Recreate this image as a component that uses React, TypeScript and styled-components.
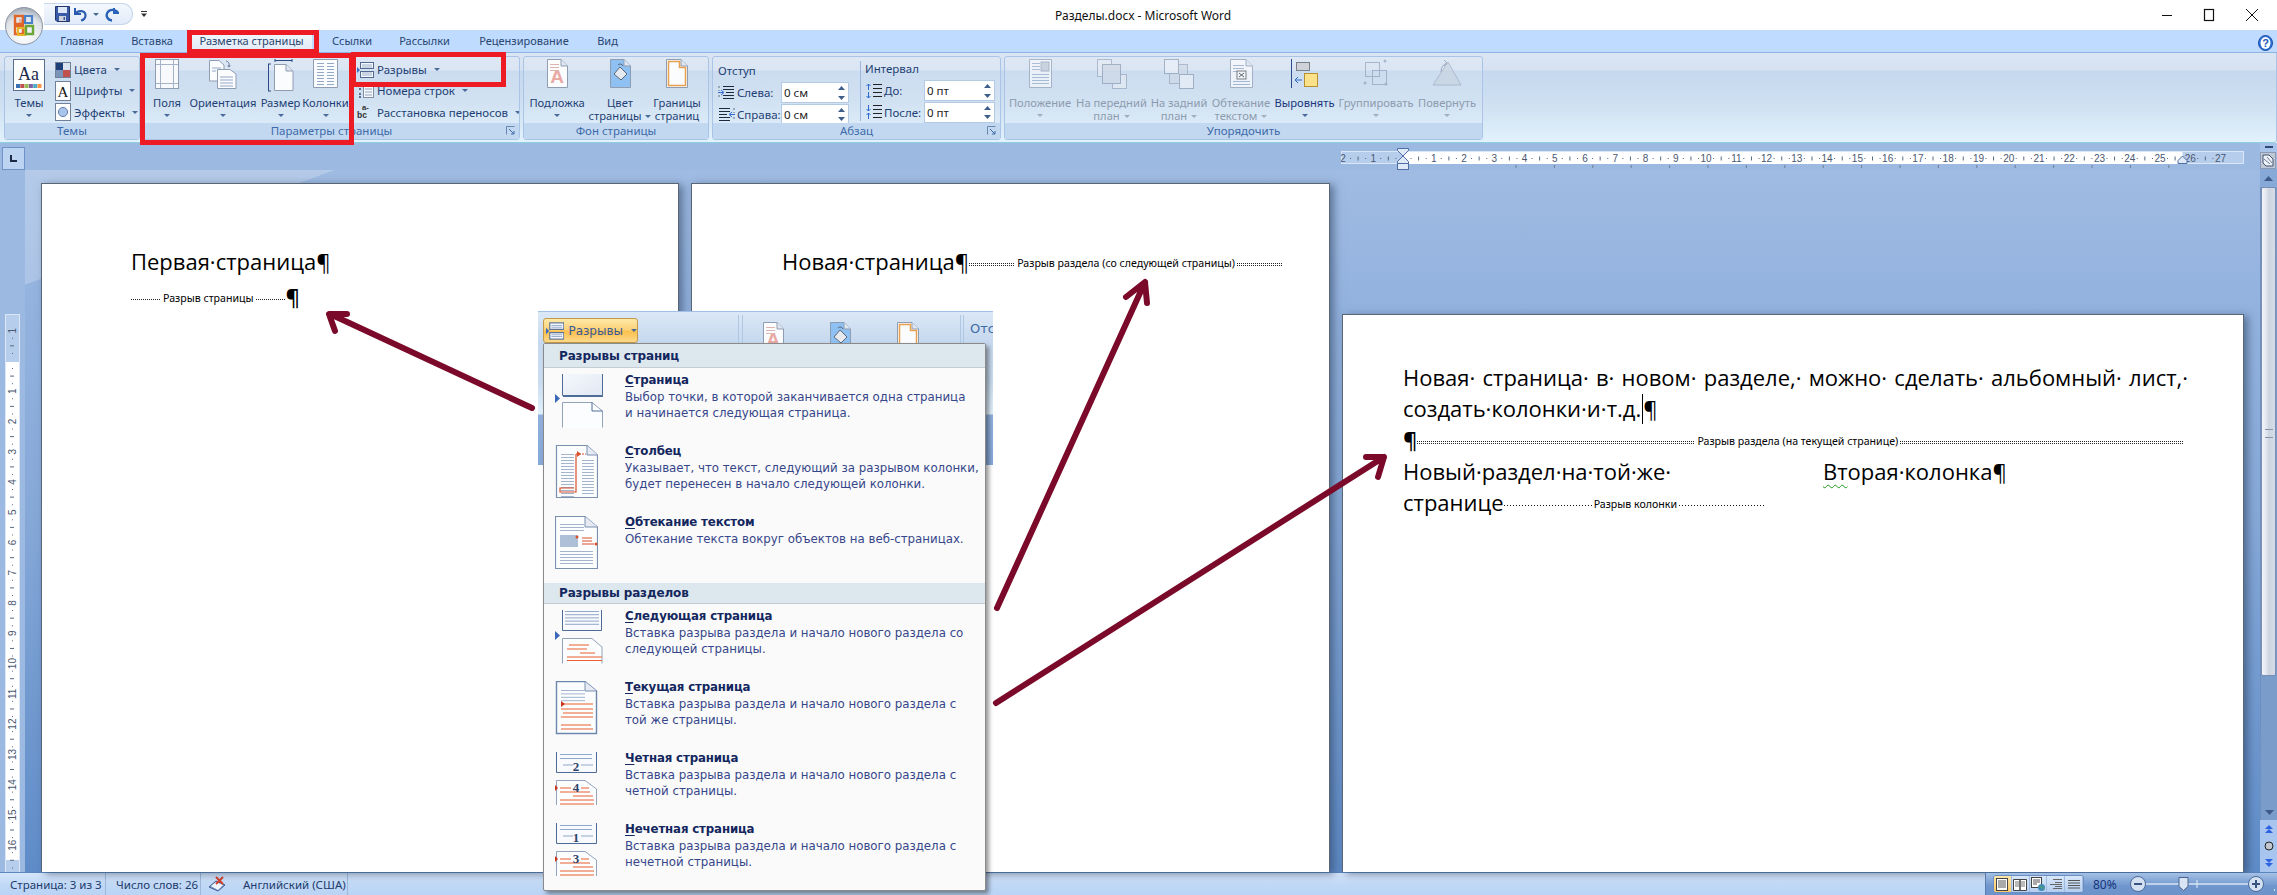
import React from "react";
import styled, { createGlobalStyle } from "styled-components";

const UI = '"Noto Sans", "Liberation Sans", sans-serif';
const DOC = '"Open Sans", "Noto Sans", sans-serif';
const MENU = '"DejaVu Sans", "Noto Sans", sans-serif';

const Global = createGlobalStyle`
  html, body { margin: 0; padding: 0; background: #fff; overflow: hidden; }
  #root { width: 2277px; height: 895px; }
`;

const Win = styled.div`
  position: relative; width: 2277px; height: 895px; overflow: hidden;
  display: flex; flex-direction: column; font-family: ${UI}; color: #1e3f74;
`;

/* ---- title bar ---- */
const TitleBar = styled.div`
  height: 30px; flex: none; display: flex; align-items: center; background: #fff; position: relative;
`;
const Qat = styled.div`
  margin: -2px 0 0 44px; width: 89px; height: 22px; flex: none; display: flex; align-items: center; gap: 0;
  background: linear-gradient(#f4f8fe, #e1ebf8); border: 1px solid #c6d6ec; border-left: none;
  border-radius: 0 12px 12px 0; box-sizing: border-box; padding-left: 9px;
`;
const QatSlot = styled.span<{ $w: number }>`
  width: ${(p) => p.$w}px; height: 20px; display: flex; align-items: center; justify-content: center; flex: none;
`;
const Customize = styled.span`
  margin: -2px 0 0 6px; width: 10px; display: flex; justify-content: center; flex: none;
`;
const Title = styled.div`
  position: absolute; left: 1055px; top: 7px; font-size: 12px; line-height: 18px; color: #111; white-space: nowrap;
`;
const WinBtns = styled.div`
  margin-left: auto; display: flex; align-items: center; gap: 30px; padding-right: 18px;
`;
const Orb = styled.div`
  position: absolute; left: 5px; top: 7px; width: 38px; height: 38px; z-index: 4;
`;

/* ---- tabs ---- */
const TabStrip = styled.div`
  height: 23px; flex: none; background: #bfdbff; display: flex; align-items: flex-end; padding-left: 51px;
  position: relative; box-sizing: border-box; border-bottom: 1px solid #8db2e3;
`;
const Tab = styled.div<{ $active?: boolean; $w: number }>`
  width: ${(p) => p.$w}px; flex: none; height: 22px; line-height: 21px; font-size: 11px; text-align: center; white-space: nowrap;
  color: #28466f; box-sizing: border-box;
  ${(p) => p.$active ? "background: linear-gradient(#f5f9fe,#dfe9f6); border-radius: 3px 3px 0 0;" : ""}
`;
const HelpDot = styled.span`
  position: absolute; right: 4px; top: 4px;
`;

/* ---- ribbon ---- */
const Ribbon = styled.div`
  height: 90px; flex: none; display: flex; gap: 3px; padding: 3px 3px 2px 4px; box-sizing: border-box;
  background: linear-gradient(#dbe6f4 0, #d6e2f2 17px, #c6d8ee 18px, #cddff1 55%, #e2f2fc 100%);
  border-bottom: 1px solid #8fd0de; border-right: 1px solid #a9c4e6; border-radius: 0 0 3px 0;
`;
const Group = styled.div<{ $w: number }>`
  width: ${(p) => p.$w}px; flex: none;
  box-sizing: border-box; display: flex; flex-direction: column;
  border: 1px solid #a9c4e6; border-radius: 3px; overflow: hidden; position: relative;
  background: linear-gradient(rgba(255,255,255,.12), rgba(255,255,255,.05));
`;
const GroupBody = styled.div<{ $pad?: number }>`
  flex: 1; display: flex; padding-left: ${(p) => p.$pad ?? 0}px; min-height: 0;
`;
const GroupLabel = styled.div`
  height: 16px; flex: none; background: #c1d8f0; text-align: center; font-size: 11.5px; line-height: 15px; color: #3e6aa8;
  position: relative;
`;
const Launcher = styled.span`
  position: absolute; right: 4px; top: 3px; width: 9px; height: 9px; display: flex;
`;
const BigBtn = styled.div<{ $w: number; $off?: boolean; $strong?: boolean }>`
  width: ${(p) => p.$w}px; flex: none; display: flex; flex-direction: column; align-items: center;
  font-size: 11.2px; line-height: 13px; white-space: nowrap;
  color: ${(p) => (p.$off ? "#8d9bae" : p.$strong ? "#19367a" : "#1e3f74")};
`;
const BigIcon = styled.div`
  height: 37px; margin-top: 2px; display: flex; align-items: flex-start; justify-content: center; flex: none;
`;
const BigLabel = styled.div`
  height: 13px; margin-top: 0; text-align: center;
`;
const Caret = styled.span<{ $off?: boolean }>`
  display: inline-block; width: 0; height: 0; margin-left: 4px; vertical-align: 2px;
  border-left: 3px solid transparent; border-right: 3px solid transparent;
  border-top: 3px solid ${(p) => (p.$off ? "#a3aebd" : "#4a6a9a")};
`;
const CaretRow = styled.div`
  height: 13px; display: flex; justify-content: center; align-items: center; width: 100%;
  & > span { margin-left: 0; }
`;
const Stack = styled.div<{ $ml?: number }>`
  display: flex; flex-direction: column; margin-left: ${(p) => p.$ml ?? 0}px; padding-top: 2px;
`;
const StackRow = styled.div`
  height: 22px; display: flex; align-items: center; font-size: 11.5px; white-space: nowrap; gap: 3px;
`;
const StackIcon = styled.span<{ $w?: number }>`
  width: ${(p) => p.$w ?? 17}px; height: 18px; flex: none; display: flex; align-items: center; justify-content: center;
`;
const ParaCol = styled.div<{ $w: number; $border?: boolean }>`
  width: ${(p) => p.$w}px; flex: none; padding-left: 4px; box-sizing: border-box; padding-top: 2px;
  ${(p) => (p.$border ? "border-right: 1px solid #9db8dc; margin: 4px 0 2px; padding-top: 0;" : "")}
`;
const ParaHead = styled.div`
  height: 21px; line-height: 20px; font-size: 11.5px;
`;
const ParaRow = styled.div`
  height: 21.5px; display: flex; align-items: center; font-size: 11.5px; white-space: nowrap;
`;
const ParaLabel = styled.span<{ $w: number }>` width: ${(p) => p.$w}px; flex: none; padding-left: 2px; box-sizing: border-box; `;
const Spin = styled.div<{ $w: number }>`
  width: ${(p) => p.$w}px; height: 21px; box-sizing: border-box; background: #fff; border: 1px solid #b4c9e4;
  display: flex; align-items: center; padding-left: 2px; font-size: 11.5px; position: relative; color: #222;
`;
const SpinArrows = styled.span`
  margin-left: auto; width: 14px; height: 19px; display: flex; flex-direction: column; align-items: center; justify-content: space-around;
`;

/* ---- workspace ---- */
const Workspace = styled.div`
  flex: 1; min-height: 0; display: flex; background: linear-gradient(#a2bde3 0, #94b3df 20%, #87a9d8 50%, #5f8cc8 100%);
`;
const Rail = styled.div`
  width: 25px; flex: none; display: flex; flex-direction: column; background: #9cb9e2;
`;
const Corner = styled.div`
  margin: 4px 0 0 2px; width: 23px; height: 23px; flex: none; box-sizing: border-box; background: #bcd3f1; border: 1px solid #6f93c9;
  display: flex; align-items: center; justify-content: center;
`;
const VRulerSvg = styled.svg` display: block; flex: none; `;
const Main = styled.div` flex: 1; min-width: 0; display: flex; flex-direction: column; `;
const RulerRow = styled.div`
  height: 27px; flex: none; padding-left: 1316px; background: linear-gradient(#9cb9e2, #9cb9e2); 
`;
const DocArea = styled.div`
  flex: 1; min-height: 0; display: flex; align-items: stretch; padding: 13px 16px 0 16px; gap: 12px;
  background: linear-gradient(to bottom right, rgba(255,255,255,.22) 49.8%, transparent 50%) no-repeat 0 0 / 310px 115px;
`;
const Page = styled.div<{ $w: number; $pl: number; $mt?: number; $pt: number }>`
  width: ${(p) => p.$w}px; flex: none; box-sizing: border-box; background: #fff; margin-top: ${(p) => p.$mt ?? 0}px;
  padding: ${(p) => p.$pt}px 0 0 ${(p) => p.$pl}px; border-top: 1px solid #5b6675; border-left: 1px solid #5b6675; border-right: 1px solid #5b6675;
  box-shadow: 4px 2px 8px rgba(40,60,90,.55); font-family: ${DOC}; color: #000; font-size: 22px; position: relative;
`;
const Line = styled.div<{ $h?: number; $w?: number }>`
  height: ${(p) => p.$h ?? 31}px; line-height: ${(p) => p.$h ?? 31}px; white-space: nowrap;
  display: flex; align-items: center; ${(p) => (p.$w ? `width:${p.$w}px;` : "")}
`;
const Justified = styled.div<{ $w: number }>`
  width: ${(p) => p.$w}px; height: 31px; line-height: 31px; white-space: normal; text-align: justify; text-align-last: justify;
`;
const Dots = styled.span<{ $w: number; $double?: boolean; $sparse?: boolean }>`
  width: ${(p) => p.$w}px; flex: none; height: ${(p) => (p.$double ? 3 : 1)}px; display: block; margin-top: 5px;
  background: ${(p) => p.$sparse
    ? "repeating-linear-gradient(90deg,#111 0 1px,transparent 1px 3px)"
    : "repeating-linear-gradient(90deg,#222 0 1px,transparent 1px 2px)"};
  ${(p) => (p.$double ? "mask: linear-gradient(#000 0 1px, transparent 1px 2px, #000 2px 3px);" : "")}
`;
const BreakText = styled.span`
  font-family: ${UI}; font-size: 10.6px; line-height: 14px; padding: 0 2px; margin-top: 3px; flex: none; color: #000;
`;
const Pil = styled.span` font-weight: 600; font-size: 22px; `;
const CaretMark = styled.span`
  display: inline-block; width: 1px; height: 30px; background: #000; vertical-align: middle; margin: 0 0 0 1px;
`;
const Columns = styled.div` display: flex; `;
const Col = styled.div<{ $w?: number }>` ${(p) => (p.$w ? `width:${p.$w}px;flex:none;` : "")} `;
const Squiggle = styled.span`
  text-decoration: underline wavy #1f9a1f 1px; text-underline-offset: 4px;
`;

/* ---- scrollbar ---- */
const VScroll = styled.div`
  width: 17px; flex: none; display: flex; flex-direction: column; align-items: stretch;
`;
const ScrollSplit = styled.div`
  height: 9px; display: flex; align-items: center; justify-content: center; flex: none; background: #a9c4ea;
`;
const ScrollIconBtn = styled.div`
  height: 17px; margin: 0 1px 0 0; background: #c0c8d6; border: 1px solid #8b9ab4; box-sizing: border-box; flex: none;
  display: flex; align-items: center; justify-content: center;
`;
const ScrollUp = styled.div`
  height: 18px; flex: none; background: #87a9d8; display: flex; align-items: center; justify-content: center;
`;
const Track = styled.div`
  flex: 1; min-height: 0; background: #7a9ccb; display: flex; flex-direction: column; border-left: 1px solid #6f8fbe;
`;
const Thumb = styled.div`
  height: 489px; flex: none; box-sizing: border-box; margin-right: 1px; border: 1px solid #7a8fb4; border-radius: 2px;
  background: linear-gradient(90deg,#f2f4f9 0,#e4e8f0 30%,#cdd5e1 55%,#d7dde7 100%); display: flex; flex-direction: column; align-items: center; padding-top: 241px;
`;
const Grip = styled.span`
  width: 8px; height: 7px; border-top: 1px solid #8594ab; border-bottom: 1px solid #8594ab; flex: none;
`;
const ScrollDown = styled.div`
  height: 16px; flex: none; background: #7a9ccb; display: flex; align-items: center; justify-content: center; margin-top: auto;
`;
const NavBox = styled.div`
  height: 52px; flex: none; background: #a7c5ef; display: flex; flex-direction: column; align-items: center; justify-content: space-around; padding: 2px 0 2px;
  box-sizing: border-box;
`;

/* ---- status bar ---- */
const Status = styled.div`
  height: 23px; flex: none; display: flex; border-top: 1px solid #5c86bf; box-sizing: border-box;
`;
const StatusLeft = styled.div`
  width: 1985px; flex: none; display: flex; align-items: center; font-size: 11.5px; color: #1c3b6d;
  background: linear-gradient(#d6e6fb, #c2d9f6 50%, #b8d3f5);
`;
const StatusCell = styled.div<{ $w: number; $pl: number }>`
  width: ${(p) => p.$w}px; height: 100%; flex: none; box-sizing: border-box; padding-left: ${(p) => p.$pl}px;
  border-right: 1px solid #9fb8da; display: flex; align-items: center; gap: 14px; white-space: nowrap;
`;
const StatusLang = styled.span` margin-left: 3px; `;
const StatusRight = styled.div`
  flex: 1; display: flex; align-items: center; background: linear-gradient(#a5c0e5, #6f96cd 60%, #6c93c9); padding-left: 7px; border-left: 1px solid #5a7db0;
  position: relative;
`;
const ViewGroup = styled.div`
  width: 91px; height: 18px; display: flex; border: 1px solid #6b8fc2; border-radius: 3px; overflow: hidden; flex: none; box-sizing: border-box;
  background: linear-gradient(#d8e7fa, #b4cef0);
`;
const ViewBtn = styled.div<{ $on?: boolean }>`
  flex: 1; display: flex; align-items: center; justify-content: center; border-right: 1px solid #a1bbe0;
  ${(p) => (p.$on ? "background: linear-gradient(#fde7a6,#fbc866);" : "")}
`;
const Zoom = styled.span` font-size: 12px; color: #16347c; margin-left: 9px; width: 30px; flex: none; `;
const ZoomTrack = styled.div`
  margin-left: 6px; width: 135px; height: 22px; flex: none;
`;

/* ---- dropdown overlay ---- */
const Flyout = styled.div`
  position: absolute; left: 538px; top: 311px; width: 455px; z-index: 6; display: flex; flex-direction: column;
  background: linear-gradient(#dce8f6 0, #c7d9ef 30px, #c9dcf0 70px, #e2f1fb 103px, #8fb0dc 104px, #86a8d8 154px, transparent 154px) no-repeat;
`;
const SliverRow = styled.div`
  height: 32px; flex: none; display: flex; align-items: flex-start; padding: 6px 0 0 5px; overflow: hidden; border-top: 1px solid #a3c0e8; box-sizing: border-box; position: relative;
`;
const HotBtn = styled.div`
  width: 95px; height: 25px; flex: none; box-sizing: border-box; display: flex; align-items: center; gap: 4px; padding-left: 2px;
  border: 1px solid #c29a4a; border-radius: 3px; font-family: ${MENU}; font-size: 12px; color: #3a5a96;
  background: linear-gradient(#fee9a8, #fdd27a 45%, #fbc04e 55%, #fdd98b);
`;
const SliverIcons = styled.div`
  margin-left: 125px; display: flex; gap: 46px; flex: none; padding-top: 4px; 
`;
const SliverHead = styled.span`
  font-family: ${MENU}; font-size: 13px; color: #3f6aa6; position: absolute; left: 432px; top: 9px; width: 23px; overflow: hidden;
`;
const Sep = styled.span<{ $x: number }>`
  position: absolute; left: ${(p) => p.$x}px; top: 3px; bottom: 0; width: 1px; background: #afc6e4;
`;
const Menu = styled.div`
  margin: 0 7px 0 5px; height: 548px; box-sizing: border-box; background: #fafafa; border: 1px solid #8a8a8a; border-radius: 2px;
  box-shadow: 3px 3px 4px rgba(0,0,0,.4); font-family: ${MENU}; position: relative;
`;
const MenuHead = styled.div<{ $h: number; $mt?: number }>`
  height: ${(p) => p.$h}px; box-sizing: border-box; background: #dde7ee; border-bottom: 1px solid #c6cdd2; padding-left: 15px; margin-top: ${(p) => p.$mt ?? 0}px;
  font-weight: 700; font-size: 12px; color: #13275e; display: flex; align-items: center; letter-spacing: -.15px;
`;
const MenuItem = styled.div`
  height: 71px; box-sizing: border-box; display: flex; 
`;
const MenuItemIcon = styled.div`
  width: 81px; flex: none; padding-left: 11px; box-sizing: border-box; display: flex; align-items: flex-start; padding-top: 6px;
`;
const MenuText = styled.div` padding-top: 4px; font-size: 11.8px; line-height: 15.5px; color: #36468a; white-space: nowrap; `;
const MenuTitle = styled.div`
  font-weight: 700; color: #13275e; height: 18px; line-height: 17px; letter-spacing: -.15px;
  & u { text-underline-offset: 2px; }
`;

/* ---- overlays ---- */
const RedBox = styled.div<{ $x: number; $y: number; $w: number; $h: number }>`
  position: absolute; left: ${(p) => p.$x}px; top: ${(p) => p.$y}px; width: ${(p) => p.$w}px; height: ${(p) => p.$h}px;
  box-sizing: border-box; border: 5px solid #ed1c24; z-index: 5; pointer-events: none;
`;
const ArrowLayer = styled.svg`
  position: absolute; left: 0; top: 0; width: 2277px; height: 895px; z-index: 7; pointer-events: none;
`;

/* ---------- icons ---------- */
const PageSvg: React.FC<{ w?: number; h?: number; children?: React.ReactNode; op?: number; fold?: boolean }> = ({ w = 24, h = 30, children, op = 1, fold = true }) => (
  <svg width={w} height={h} viewBox={`0 0 ${w} ${h}`} opacity={op}>
    <path d={fold ? `M.5 .5H${w - 7}L${w - .5} 7V${h - .5}H.5Z` : `M.5 .5H${w - .5}V${h - .5}H.5Z`} fill="#fbfcfe" stroke="#8f9db3" />
    {fold && <path d={`M${w - 7} .5V7H${w - .5}`} fill="#dfe6f0" stroke="#8f9db3" />}
    {children}
  </svg>
);
const Lines: React.FC<{ x: number; y: number; w: number; n: number; gap?: number; c?: string }> = ({ x, y, w, n, gap = 3, c = "#93a7c6" }) => (
  <path d={Array.from({ length: n }, (_, i) => `M${x} ${y + i * gap + .5}h${w}`).join("")} stroke={c} fill="none" />
);

const Themes = () => (
  <svg width="32" height="32" viewBox="0 0 32 32">
    <rect x=".5" y=".5" width="31" height="31" fill="#fff" stroke="#5a6d8c" />
    <text x="15.5" y="21" fontFamily="Liberation Serif, serif" fontSize="18" textAnchor="middle" fill="#1a2a4a">Aa</text>
    {["#3b6fb5", "#c0504d", "#9bbb59", "#8064a2", "#4bacc6", "#f79646"].map((c, i) => (
      <rect key={c} x={3 + i * 4.3} y="25" width="4" height="4" fill={c} />
    ))}
  </svg>
);
const ColorsIco = () => (
  <svg width="16" height="16"><rect x=".5" y=".5" width="15" height="15" fill="#dfe8f5" stroke="#71819b" /><rect x="1" y="1" width="7" height="7" fill="#1f3f77" /><rect x="8" y="8" width="7" height="7" fill="#c0504d" /><rect x="8" y="1" width="7" height="7" fill="#dbe3ee" /><rect x="1" y="8" width="7" height="7" fill="#7b93b8" /></svg>
);
const FontsIco = () => (
  <svg width="16" height="20"><rect x=".5" y=".5" width="15" height="19" fill="#fff" stroke="#71819b" /><text x="8" y="15.5" textAnchor="middle" fontFamily="Liberation Serif, serif" fontSize="15" fill="#111">A</text></svg>
);
const EffectsIco = () => (
  <svg width="16" height="18"><rect x=".5" y=".5" width="15" height="17" fill="#fff" stroke="#71819b" /><circle cx="8" cy="9" r="4.6" fill="#a8c4ea" stroke="#5f7ea8" /></svg>
);
const MarginsIco = () => (
  <svg width="24" height="30"><rect x=".5" y=".5" width="23" height="29" fill="#f7f9fc" stroke="#8f9db3" /><path d="M5.5 1V29M18.5 1V29M1 5.5H23M1 24.5H23" stroke="#a5b3c9" /></svg>
);
const OrientIco = () => (
  <svg width="28" height="30" viewBox="0 0 28 30">
    <path d="M.5 1.5H10L15 6V22H.5Z" fill="#fbfcfe" stroke="#8f9db3" />
    <path d="M8.5 10.5H21L27 15V29.5H8.5Z" fill="#fbfcfe" stroke="#8f9db3" />
    <path d="M3 9h9M3 12h4M11 18h13M11 21h13M11 24h13M11 27h13" stroke="#93a7c6" />
    <path d="M17 2q4 1 3 5" fill="none" stroke="#6b7f9f" /><path d="M18 6.5l2 2 2-2" fill="#6b7f9f" />
  </svg>
);
const SizeIco = () => (
  <svg width="26" height="33" viewBox="0 0 26 33">
    <path d="M7 1.5H24M7 0V3M24 0V3" stroke="#2b4a86" />
    <path d="M.5 5V32M0 5H3M0 32H3" stroke="#2b4a86" />
    <path d="M6.5 5.5H18L25 12V31.5H6.5Z" fill="#fbfcfe" stroke="#8f9db3" />
    <path d="M18 5.5V12H25" fill="#dfe6f0" stroke="#8f9db3" />
  </svg>
);
const ColumnsIco = () => (
  <PageSvg w={25} h={29} fold={false}>
    <Lines x={4} y={4} w={7} n={8} /><Lines x={14} y={4} w={7} n={8} />
  </PageSvg>
);
const BreaksIco: React.FC<{ s?: number }> = ({ s = 1 }) => (
  <svg width={17 * s} height={16 * s} viewBox="0 0 17 16">
    <rect x="3.5" y=".5" width="13" height="6" fill="#f5f8fd" stroke="#526a91" /><path d="M5 3h10M5 5h10" stroke="#9cb0cd" />
    <rect x="3.5" y="9.5" width="13" height="6" fill="#f5f8fd" stroke="#526a91" /><path d="M5 11h10M5 13h10" stroke="#9cb0cd" />
    <path d="M0 5l3 3-3 3z" fill="#3a6fc4" />
  </svg>
);
const LineNumIco = () => (
  <svg width="17" height="17" viewBox="0 0 17 17"><path d="M2 2h2M2 7h2M2 12h2M2 15h2" stroke="#354a72" strokeWidth="1.5" /><rect x="6.5" y=".5" width="10" height="15" fill="#f7f9fc" stroke="#7f8fa8" /><path d="M8 4h7M8 7h7M8 10h7M8 13h7" stroke="#8fa3c2" /></svg>
);
const HyphIco = () => (
  <svg width="20" height="18" viewBox="0 0 20 18"><text x="6" y="7" fontSize="9" fontFamily="Liberation Sans, sans-serif" fontWeight="700" fill="#333">a-</text><text x="0" y="16" fontSize="10" fontFamily="Liberation Sans, sans-serif" fontWeight="700" fill="#333">bc</text></svg>
);
const WaterIco = () => (
  <PageSvg w={21} h={29}><text x="10" y="24" textAnchor="middle" fontSize="19" fontFamily="Liberation Sans, sans-serif" fontWeight="700" fill="#e9a9a4">A</text><Lines x={3} y={5} w={9} n={3} c="#dfb3b0" /></PageSvg>
);
const PageColorIco = () => (
  <svg width="21" height="29" viewBox="0 0 21 29"><path d="M.5 .5H14L20.5 7V28.5H.5Z" fill="#8ec1f2" stroke="#8f9db3" /><path d="M14 .5V7H20.5" fill="#dfe6f0" stroke="#8f9db3" /><path d="M4 15l6-7 7 7-6 6z" fill="#e6e9ee" stroke="#5a6779" /><path d="M8 6a3 3 0 0 1 5 1" fill="none" stroke="#5a6779" /></svg>
);
const BordersIco = () => (
  <svg width="22" height="29" viewBox="0 0 22 29"><path d="M.5 .5H15L21.5 7V28.5H.5Z" fill="#fbfcfe" stroke="#8f9db3" /><path d="M15 .5V7H21.5" fill="#dfe6f0" stroke="#8f9db3" /><path d="M2.5 2.5H13.5V8.5H19.5V26.5H2.5Z" fill="none" stroke="#e8a14f" strokeWidth="1.5" /></svg>
);
const IndentIco: React.FC<{ flip?: boolean }> = ({ flip }) => (
  <svg width="17" height="15" viewBox="0 0 17 15">
    <g transform={flip ? "translate(17 0) scale(-1 1)" : undefined}>
      <path d="M5 1.5h11M5 4.5h11M8 7.5h8M5 10.5h11M5 13.5h11" stroke="#1e2a40" /><path d="M0 7.5h5M3 5l3 2.5-3 2.5" stroke="#2f6ad0" fill="none" /><path d="M1 1v2M1 5v1M1 10v2" stroke="#5a6b85" />
    </g>
  </svg>
);
const SpaceIco: React.FC<{ up?: boolean }> = ({ up }) => (
  <svg width="17" height="16" viewBox="0 0 17 16"><path d="M8 1.5h9M8 5.5h9M8 9.5h9M8 13.5h9" stroke="#222" /><path d={up ? "M3.5 1v6M1.5 3l2-2 2 2M3.5 9v6M1.5 13l2 2 2-2" : "M3.5 1v6M1.5 5l2 2 2-2M3.5 9v6M1.5 11l2-2 2 2"} stroke="#2f6ad0" fill="none" /></svg>
);
const SpinBtns = () => (
  <SpinArrows>
    <svg width="7" height="4"><path d="M0 4L3.5 0 7 4z" fill="#3f5e8c" /></svg>
    <svg width="7" height="4"><path d="M0 0L3.5 4 7 0z" fill="#3f5e8c" /></svg>
  </SpinArrows>
);
const PositionIco = () => (<PageSvg w={23} h={29} fold={false} op={.65}><Lines x={3} y={4} w={8} n={3} /><rect x="12" y="3" width="8" height="9" fill="#bfc9d6" stroke="#8f9db3" /><Lines x={3} y={15} w={17} n={4} /></PageSvg>);
const FrontIco = () => (
  <svg width="30" height="30" opacity=".6"><rect x=".5" y=".5" width="14" height="17" fill="#e8edf4" stroke="#8f9db3" /><rect x="15.5" y="15.5" width="14" height="14" fill="#e8edf4" stroke="#8f9db3" /><rect x="5.5" y="5.5" width="18" height="19" fill="#cfd8e4" stroke="#7f8fa8" /></svg>
);
const BackIco = () => (
  <svg width="30" height="30" opacity=".6"><rect x="5.5" y="5.5" width="18" height="19" fill="#cfd8e4" stroke="#8f9db3" /><rect x=".5" y=".5" width="14" height="14" fill="#eef2f8" stroke="#7f8fa8" /><rect x="15.5" y="15.5" width="14" height="14" fill="#eef2f8" stroke="#7f8fa8" /></svg>
);
const WrapIco = () => (<PageSvg w={23} h={29} op={.7}><Lines x={3} y={6} w={11} n={3} /><rect x="7" y="12" width="9" height="8" fill="#fff" stroke="#555" /><path d="M9 14l5 4M14 14l-5 4" stroke="#333" /><Lines x={3} y={22} w={17} n={2} /></PageSvg>);
const AlignIco = () => (
  <svg width="28" height="29" viewBox="0 0 28 29"><path d="M.5 0V29" stroke="#2c4c8c" /><rect x="5.5" y="3.5" width="13" height="8" fill="#cfd2d8" stroke="#7a7f88" /><rect x="13.5" y="14.5" width="13" height="13" fill="#fbe28a" stroke="#b8912f" /><path d="M11 21H4M7 18l-3 3 3 3" stroke="#2f6ad0" fill="none" /></svg>
);
const GroupIco = () => (
  <svg width="26" height="28" opacity=".55"><rect x="2.5" y="3.5" width="14" height="14" fill="none" stroke="#7f8fa8" /><rect x="9.5" y="11.5" width="14" height="14" fill="none" stroke="#7f8fa8" /><circle cx="22" cy="2" r="1.5" fill="#7f8fa8" /><circle cx="2" cy="24" r="1.5" fill="#7f8fa8" /><circle cx="23" cy="25" r="1.5" fill="#7f8fa8" /></svg>
);
const RotateIco = () => (
  <svg width="30" height="28" opacity=".55"><path d="M1 26L16 3l13 23z" fill="#c6cfdb" stroke="#8f9db3" /><path d="M9 13q0-7 6-9M12 1l3 3-3 3" fill="none" stroke="#6e7f99" /></svg>
);

/* menu thumbs */
const Chevron = () => <path d="M0 0l5 4.5L0 9z" fill="#3a67b8" />;
const BreakPageThumb = () => (
  <svg width="48" height="54" viewBox="0 0 48 54">
    <defs><linearGradient id="g1" x1="0" x2="1" y1="0" y2="1"><stop offset="0" stopColor="#f5f8fc" /><stop offset="1" stopColor="#e1e8f4" /></linearGradient></defs>
    <path d="M7.5 0V21.5H47.5V0" fill="url(#g1)" stroke="#4e6c98" /><rect x="8" y="21.5" width="40" height="1.5" fill="#4e6c98" />
    <path d="M7.5 53.5V28.5H37L47.5 37V53.5" fill="#fcfdff" stroke="#93a3bb" /><path d="M37 28.5V37H47.5" fill="none" stroke="#4e6c98" />
    <g transform="translate(0 20)"><Chevron /></g>
  </svg>
);
const ColumnThumb = () => (
  <svg width="43" height="54" viewBox="0 0 43 54">
    <path d="M1.5 .5H32L42.5 10V52.5H1.5Z" fill="#fcfdff" stroke="#7b90af" strokeWidth="1.2" /><path d="M32 .5V10H42.5" fill="#e5eaf3" stroke="#7b90af" />
    <Lines x={6} y={9} w={13} n={15} gap={3} c="#a3b4cc" /><Lines x={27} y={15} w={12} n={12} gap={3} c="#a3b4cc" />
    <path d="M21 9V47H5V43H19" fill="none" stroke="#d8502a" strokeWidth="1.2" /><path d="M21 9h10" stroke="#d8502a" strokeDasharray="2 1" /><path d="M22 6l4 3-4 3z" fill="#d8502a" />
  </svg>
);
const WrapThumb = () => (
  <svg width="43" height="54" viewBox="0 0 43 54">
    <path d="M.5 .5H30L42.5 11V52.5H.5Z" fill="#fcfdff" stroke="#7b90af" strokeWidth="1.2" /><path d="M30 .5V11H42.5" fill="#e5eaf3" stroke="#7b90af" />
    <Lines x={5} y={8} w={24} n={3} c="#a3b4cc" /><rect x="5" y="19" width="18" height="12" fill="#aebfd8" />
    <path d="M27 22h10M27 25h10M27 28h12" stroke="#d8502a" /><circle cx="41" cy="28" r="1.5" fill="#d8502a" /><circle cx="22" cy="21" r="1.5" fill="#d8502a" />
    <Lines x={5} y={35} w={33} n={5} c="#a3b4cc" />
  </svg>
);
const NextThumb = () => (
  <svg width="48" height="54" viewBox="0 0 48 54">
    <path d="M7.5 0V20.5H46.5V0" fill="#f8fafd" stroke="#4e6c98" /><Lines x={10} y={1} w={34} n={5} gap={3.2} c="#93a7c6" />
    <path d="M7.5 53.5V28.5H37L47 37V53.5" fill="#fcfdff" stroke="#93a3bb" />
    <path d="M14 35h20M12 39h20M25 43h15M12 47h35M12 50.5h35" stroke="#e8612c" />
    <g transform="translate(0 21)"><Chevron /></g>
  </svg>
);
const CurrentThumb = () => (
  <svg width="43" height="54" viewBox="0 0 43 54">
    <path d="M1.5 .5H30L41.5 10V52.5H1.5Z" fill="#fcfdff" stroke="#6c86ac" strokeWidth="1.4" /><path d="M30 .5V10H41.5" fill="#e5eaf3" stroke="#7b90af" />
    <Lines x={6} y={9} w={24} n={4} gap={3.4} c="#a3b4cc" />
    <path d="M8 23h30M6 28h32M8 32h30M6 36h32M6 44h30M6 48h32" stroke="#e8612c" /><path d="M6 20l4 3-4 3z" fill="#c8361a" />
  </svg>
);
const NumThumb: React.FC<{ a: string; b: string }> = ({ a, b }) => (
  <svg width="46" height="54" viewBox="0 0 46 54">
    <path d="M1.5 0V20.5H41.5V0" fill="#f8fafd" stroke="#4e6c98" /><Lines x={5} y={2} w={32} n={2} gap={4} c="#93a7c6" />
    <path d="M8 13h10M26 13h12" stroke="#93a7c6" /><text x="21" y="19" fontFamily="Liberation Serif, serif" fontWeight="700" fontSize="13" textAnchor="middle" fill="#2f4468">{a}</text>
    <path d="M1.5 53V28.5H30L41.5 37V53" fill="#fcfdff" stroke="#93a3bb" />
    <path d="M5 36h11M26 36h8M5 40h30M18 44h20M5 48h34M5 52h34" stroke="#e8612c" /><path d="M0 33l3 3-3 3z" fill="#c8361a" />
    <text x="21" y="40" fontFamily="Liberation Serif, serif" fontWeight="700" fontSize="13" textAnchor="middle" fill="#2f4468">{b}</text>
  </svg>
);

const Ruler = () => {
  const X0 = 1403.5 - 1341;
  const s = 30.26;
  const items: React.ReactNode[] = [];
  for (let i = -2; i <= 27; i++) {
    const x = X0 + i * s;
    if (i !== 0) items.push(<text key={`n${i}`} x={x} y={19} textAnchor="middle" fontSize="10" fontFamily="Liberation Sans, sans-serif" fill="#4a5870">{Math.abs(i)}</text>);
    if (i < 27) {
      items.push(<path key={`t${i}`} d={`M${x + 7.5} 15v1M${x + 15.1} 13.5v4M${x + 22.7} 15v1`} stroke="#5a6880" fill="none" />);
    }
  }
  const stops = Array.from({ length: 18 }, (_, i) => 1516 - 1341 + i * 38.4 - 0);
  return (
    <svg width="920" height="27" viewBox="0 0 920 27" display="block">
      <rect x=".5" y="8.5" width="902" height="12" fill="#b7cdec" stroke="#dbe7f7" />
      <rect x="62.5" y="9" width="779" height="12" fill="#fff" />
      {items}
      {stops.map((x, i) => <path key={i} d={`M${x} 22v3`} stroke="#6f7f98" />)}
      <path d="M56.5 5.5h11v2L62 13l-5.5-5.5zM56.5 20.5v-2L62 13l5.500 5.500v2z" fill="#dfe9f7" stroke="#4f6fa5" />
      <rect x="56.500" y="20.500" width="11" height="6" fill="#dfe9f7" stroke="#4f6fa5" />
      <path d="M837 20.500v-3L841.500 13l4.500 4.500v3z" fill="#dfe9f7" stroke="#4f6fa5" />
    </svg>
  );
};

const VRuler = () => {
  const Y0 = 361 - 170;
  const s = 30.26;
  const items: React.ReactNode[] = [];
  for (let i = -1; i <= 16; i++) {
    const y = Y0 + i * s;
    if (i !== 0) items.push(<text key={`n${i}`} transform={`translate(16 ${y}) rotate(-90)`} textAnchor="middle" fontSize="10" fontFamily="Liberation Sans, sans-serif" fill="#4a5870">{Math.abs(i)}</text>);
    items.push(<path key={`t${i}`} d={`M12 ${y + 7.5}h1M10 ${y + 15.1}h4M12 ${y + 22.7}h1`} stroke="#5a6880" fill="none" />);
  }
  return (
    <VRulerSvg width="25" height="702" viewBox="0 0 25 702">
      <rect x="5.500" y="144.500" width="14" height="560" fill="#b7cdec" stroke="#dbe7f7" />
      <rect x="6" y="192" width="13" height="498" fill="#fff" />
      {items}
    </VRulerSvg>
  );
};

type BigProps = { w: number; icon: React.ReactNode; l1: string; l2?: string; off?: boolean; strong?: boolean };
const Big: React.FC<BigProps> = ({ w, icon, l1, l2, off, strong }) => (
  <BigBtn $w={w} $off={off} $strong={strong}>
    <BigIcon>{icon}</BigIcon>
    <BigLabel>{l1}</BigLabel>
    {l2 ? <BigLabel>{l2}<Caret $off={off} /></BigLabel> : <CaretRow><Caret $off={off} /></CaretRow>}
  </BigBtn>
);

const Item: React.FC<{ icon: React.ReactNode; u: string; rest: string; d1: string; d2?: string }> = ({ icon, u, rest, d1, d2 }) => (
  <MenuItem>
    <MenuItemIcon>{icon}</MenuItemIcon>
    <MenuText>
      <MenuTitle><u>{u}</u>{rest}</MenuTitle>
      <div>{d1}</div>
      {d2 && <div>{d2}</div>}
    </MenuText>
  </MenuItem>
);

export default function App() {
  return (
    <Win>
      <Global />
      <TitleBar>
        <Qat>
          <QatSlot $w={18}>
            <svg width="15" height="16" viewBox="0 0 15 16"><path d="M.5 .5H14.500V15.500H2L.5 14Z" fill="#3a5aa8" stroke="#24386e" /><rect x="3" y="1" width="9" height="6" fill="#dfe8f7" /><rect x="4" y="10" width="7" height="5" fill="#cfd4dc" /><rect x="8.500" y="11" width="1.500" height="3" fill="#3a5aa8" /></svg>
          </QatSlot>
          <QatSlot $w={18}>
            <svg width="15" height="15" viewBox="0 0 15 15"><path d="M2 1v6h6" fill="none" stroke="#2a5bb0" strokeWidth="2" /><path d="M2.500 6.500C5 3 12 3 12.500 8c.3 3-2 5-4.500 5.500" fill="none" stroke="#2a5bb0" strokeWidth="2.200" /></svg>
          </QatSlot>
          <QatSlot $w={10}><Caret /></QatSlot>
          <QatSlot $w={26}>
            <svg width="15" height="15" viewBox="0 0 15 15"><path d="M9 1v5h5" fill="none" stroke="#2a62b8" strokeWidth="2" /><path d="M13 6C11.500 2.500 5 1.500 2.500 5.500c-2 3.500 0 7.500 4.500 8" fill="none" stroke="#2a62b8" strokeWidth="2.400" /></svg>
          </QatSlot>
        </Qat>
        <Customize>
          <svg width="6" height="8"><path d="M0 1.500h6" stroke="#333" strokeWidth="1" /><path d="M0 3.500h6L3 7z" fill="#333" /></svg>
        </Customize>
        <Title>Разделы.docx - Microsoft Word</Title>
        <WinBtns>
          <svg width="12" height="12"><path d="M1 6.500h10" stroke="#111" strokeWidth="1" /></svg>
          <svg width="12" height="14"><rect x="1.500" y="1.500" width="9" height="11" fill="none" stroke="#111" strokeWidth="1.200" /></svg>
          <svg width="14" height="14"><path d="M1 1l12 12M13 1L1 13" stroke="#111" /></svg>
        </WinBtns>
      </TitleBar>
      <Orb>
        <svg width="38" height="38" viewBox="0 0 38 38">
          <defs>
            <radialGradient id="orb" cx=".5" cy=".8" r=".8"><stop offset="0" stopColor="#fdfdfd" /><stop offset=".7" stopColor="#dfe3e8" /><stop offset="1" stopColor="#9ea6b2" /></radialGradient>
          </defs>
          <circle cx="19" cy="19" r="18.500" fill="url(#orb)" stroke="#8a95a5" />
          <path d="M10 9h8v8h-8zM10 19h8v8h-8z" fill="none" stroke="#e0652a" strokeWidth="2.400" />
          <path d="M20 9h7v7h-7z" fill="none" stroke="#4a80c8" strokeWidth="2.200" />
          <path d="M13 21h7v7h-7z" fill="none" stroke="#e7b529" strokeWidth="2.200" />
          <path d="M21 19h7v8h-7z" fill="none" stroke="#6ba63a" strokeWidth="2.400" />
          <path d="M14 12h5v5h-5z" fill="#e0652a" opacity=".4" />
        </svg>
      </Orb>

      <TabStrip>
        <Tab $w={62}>Главная</Tab>
        <Tab $w={78}>Вставка</Tab>
        <Tab $w={121} $active>Разметка страницы</Tab>
        <Tab $w={80}>Ссылки</Tab>
        <Tab $w={65}>Рассылки</Tab>
        <Tab $w={134}>Рецензирование</Tab>
        <Tab $w={33}>Вид</Tab>
        <HelpDot>
          <svg width="15" height="16" viewBox="0 0 15 16"><ellipse cx="7.500" cy="8" rx="7" ry="7.500" fill="#2c72d8" stroke="#1c4fa8" /><ellipse cx="7.500" cy="8" rx="5" ry="6" fill="#fff" /><text x="7.500" y="12" textAnchor="middle" fontSize="11" fontWeight="700" fontFamily="Liberation Sans, sans-serif" fill="#2257b8">?</text></svg>
        </HelpDot>
      </TabStrip>

      <Ribbon>
        <Group $w={136}>
          <GroupBody $pad={2}>
            <Big w={44} icon={<Themes />} l1="Темы" />
            <Stack $ml={3}>
              <StackRow><StackIcon><ColorsIco /></StackIcon>Цвета<Caret /></StackRow>
              <StackRow><StackIcon><FontsIco /></StackIcon>Шрифты<Caret /></StackRow>
              <StackRow><StackIcon><EffectsIco /></StackIcon>Эффекты<Caret /></StackRow>
            </Stack>
          </GroupBody>
          <GroupLabel>Темы</GroupLabel>
        </Group>
        <Group $w={377}>
          <GroupBody $pad={4}>
            <Big w={38} icon={<MarginsIco />} l1="Поля" />
            <Big w={74} icon={<OrientIco />} l1="Ориентация" />
            <Big w={41} icon={<SizeIco />} l1="Размер" />
            <Big w={49} icon={<ColumnsIco />} l1="Колонки" />
            <Stack $ml={7}>
              <StackRow><StackIcon><BreaksIco /></StackIcon>Разрывы<Caret /></StackRow>
              <StackRow><StackIcon><LineNumIco /></StackIcon>Номера строк<Caret /></StackRow>
              <StackRow><StackIcon><HyphIco /></StackIcon>Расстановка переносов<Caret /></StackRow>
            </Stack>
          </GroupBody>
          <GroupLabel>Параметры страницы
            <Launcher><svg width="9" height="9"><path d="M.5 8.500V.5H8.500" fill="none" stroke="#6a87ad" /><path d="M3 3l5 5M8 5v3H5" fill="none" stroke="#3e6aa8" /></svg></Launcher>
          </GroupLabel>
        </Group>
        <Group $w={186}>
          <GroupBody $pad={2}>
            <Big w={62} icon={<WaterIco />} l1="Подложка" />
            <Big w={64} icon={<PageColorIco />} l1="Цвет" l2="страницы" />
            <BigBtn $w={50}>
              <BigIcon><BordersIco /></BigIcon>
              <BigLabel>Границы</BigLabel>
              <BigLabel>страниц</BigLabel>
            </BigBtn>
          </GroupBody>
          <GroupLabel>Фон страницы</GroupLabel>
        </Group>
        <Group $w={289}>
          <GroupBody $pad={1}>
            <ParaCol $w={147} $border>
              <ParaHead>Отступ</ParaHead>
              <ParaRow><IndentIco /><ParaLabel $w={46}>Слева:</ParaLabel><Spin $w={68}>0 см<SpinBtns /></Spin></ParaRow>
              <ParaRow><IndentIco flip /><ParaLabel $w={46}>Справа:</ParaLabel><Spin $w={68}>0 см<SpinBtns /></Spin></ParaRow>
            </ParaCol>
            <ParaCol $w={138}>
              <ParaHead>Интервал</ParaHead>
              <ParaRow><SpaceIco up /><ParaLabel $w={42}>До:</ParaLabel><Spin $w={71}>0 пт<SpinBtns /></Spin></ParaRow>
              <ParaRow><SpaceIco /><ParaLabel $w={42}>После:</ParaLabel><Spin $w={71}>0 пт<SpinBtns /></Spin></ParaRow>
            </ParaCol>
          </GroupBody>
          <GroupLabel>Абзац
            <Launcher><svg width="9" height="9"><path d="M.5 8.500V.5H8.500" fill="none" stroke="#6a87ad" /><path d="M3 3l5 5M8 5v3H5" fill="none" stroke="#3e6aa8" /></svg></Launcher>
          </GroupLabel>
        </Group>
        <Group $w={479}>
          <GroupBody $pad={1}>
            <Big off w={68} icon={<PositionIco />} l1="Положение" />
            <Big off w={75} icon={<FrontIco />} l1="На передний" l2="план" />
            <Big off w={60} icon={<BackIco />} l1="На задний" l2="план" />
            <Big off w={64} icon={<WrapIco />} l1="Обтекание" l2="текстом" />
            <Big strong w={63} icon={<AlignIco />} l1="Выровнять" />
            <Big off w={80} icon={<GroupIco />} l1="Группировать" />
            <Big off w={62} icon={<RotateIco />} l1="Повернуть" />
          </GroupBody>
          <GroupLabel>Упорядочить</GroupLabel>
        </Group>
      </Ribbon>

      <Workspace>
        <Rail>
          <Corner>
            <svg width="9" height="9"><path d="M2 1v6h6" fill="none" stroke="#1c2a44" strokeWidth="2" /></svg>
          </Corner>
          <VRuler />
        </Rail>
        <Main>
          <RulerRow><Ruler /></RulerRow>
          <DocArea>
            <Page $w={638} $pl={89} $pt={62}>
              <Line>Первая·страница¶</Line>
              <Line $h={39}>
                <Dots $w={30} /><BreakText>Разрыв страницы</BreakText><Dots $w={30} /><Pil>¶</Pil>
              </Line>
            </Page>
            <Page $w={639} $pl={90} $pt={62}>
              <Line>
                Новая·страница¶<Dots $double $w={46} /><BreakText>Разрыв раздела (со следующей страницы)</BreakText><Dots $double $w={46} />
              </Line>
            </Page>
            <Page $w={902} $pl={60} $pt={47} $mt={131}>
              <Justified $w={785}>Новая· страница· в· новом· разделе,· можно· сделать· альбомный· лист,·</Justified>
              <Line>создать·колонки·и·т.д.<CaretMark />¶</Line>
              <Line>
                <Pil>¶</Pil><Dots $double $w={278} /><BreakText>Разрыв раздела (на текущей странице)</BreakText><Dots $double $w={283} />
              </Line>
              <Columns>
                <Col $w={420}>
                  <Line $h={33}>Новый·раздел·на·той·же·</Line>
                  <Line $h={29}>
                    странице<Dots $sparse $w={88} /><BreakText>Разрыв колонки</BreakText><Dots $sparse $w={85} />
                  </Line>
                </Col>
                <Col>
                  <Line $h={33}><span><Squiggle>Вт</Squiggle>орая·колонка¶</span></Line>
                </Col>
              </Columns>
            </Page>
          </DocArea>
        </Main>
        <VScroll>
          <ScrollSplit><svg width="8" height="3"><rect width="8" height="2" fill="#2f4a78" /></svg></ScrollSplit>
          <ScrollIconBtn>
            <svg width="13" height="13" viewBox="0 0 13 13"><path d="M1 1h6l4 4v7H4L1 9z" fill="#eef1f6" stroke="#3f5270" /><path d="M5 3l5 6M2 5l6 5" stroke="#6e7f99" /></svg>
          </ScrollIconBtn>
          <ScrollUp><svg width="9" height="5"><path d="M0 5L4.500 0 9 5z" fill="#3e5a8a" /></svg></ScrollUp>
          <Track>
            <Thumb><Grip /></Thumb>
            <ScrollDown><svg width="9" height="5"><path d="M0 0L4.500 5 9 0z" fill="#3e5a8a" /></svg></ScrollDown>
          </Track>
          <NavBox>
            <svg width="8" height="9"><path d="M4 0L8 4H0zM4 4l4 4H0z" fill="#2b63e0" /></svg>
            <svg width="10" height="10"><circle cx="5" cy="5" r="4" fill="#c2c6cd" stroke="#222" /></svg>
            <svg width="8" height="9"><path d="M0 1h8L4 5zM0 5h8L4 9z" fill="#2b63e0" /></svg>
          </NavBox>
        </VScroll>
      </Workspace>

      <Status>
        <StatusLeft>
          <StatusCell $w={106} $pl={10}>Страница: 3 из 3</StatusCell>
          <StatusCell $w={95} $pl={10}>Число слов: 26</StatusCell>
          <StatusCell $w={147} $pl={7}>
            <svg width="18" height="16" viewBox="0 0 18 16"><path d="M1 11l7-6 9 4-7 6z" fill="#7f9fd0" stroke="#3f5e92" /><path d="M3 10l5-4 7 3-5 5z" fill="#f2f5fb" /><path d="M8 1l7 7M15 1L8 8" stroke="#d8402a" strokeWidth="2" /></svg>
            <StatusLang>Английский (США)</StatusLang>
          </StatusCell>
        </StatusLeft>
        <StatusRight>
          <ViewGroup>
            <ViewBtn $on><svg width="12" height="13"><rect x=".5" y=".5" width="11" height="12" fill="#fff" stroke="#444" /><path d="M2 3h8M2 5h8M2 7h8M2 9h8" stroke="#555" /></svg></ViewBtn>
            <ViewBtn><svg width="14" height="13"><path d="M.5 1.500H7V12.500H.5ZM7 1.500H13.500V12.500H7Z" fill="#fff" stroke="#444" /><path d="M2 4h4M2 6h4M2 8h4M8 4h4M8 6h4M8 8h4" stroke="#777" /></svg></ViewBtn>
            <ViewBtn><svg width="14" height="14"><rect x=".5" y=".5" width="10" height="10" fill="#fff" stroke="#444" /><path d="M2 3h7M2 5h7M2 7h4" stroke="#555" /><circle cx="10.500" cy="10.500" r="3.500" fill="#3e8ab8" /><path d="M8.500 10h3l1 2" stroke="#5aaa4a" fill="none" /></svg></ViewBtn>
            <ViewBtn><svg width="12" height="12"><path d="M3 1.500h9M5 4.500h7M0 6.500h12M5 8.500h7M3 10.500h9" stroke="#666" /></svg></ViewBtn>
            <ViewBtn><svg width="12" height="11"><path d="M0 1.500h12M0 4h12M0 6.500h12M0 9h12" stroke="#555" /></svg></ViewBtn>
          </ViewGroup>
          <Zoom>80%</Zoom>
          <ZoomTrack>
            <svg width="170" height="22" viewBox="0 0 170 22">
              <path d="M14 11H126" stroke="#d9e4f4" strokeWidth="1.500" />
              <path d="M68 7v8" stroke="#e6eefa" />
              <circle cx="9" cy="11" r="7.500" fill="#d4e1f3" stroke="#4d6a96" />
              <rect x="5" y="10" width="8" height="2" fill="#39547f" />
              <path d="M50 4.500h9v9l-4.500 4-4.500-4z" fill="#d9e4f4" stroke="#48648e" />
              <circle cx="127" cy="11" r="7.500" fill="#d4e1f3" stroke="#4d6a96" />
              <path d="M123 11h8M127 7v8" stroke="#39547f" strokeWidth="2" />
              <path d="M153 17h1M149 17h1M153 13h1M145 17h1M149 13h1M153 9h1" stroke="#dde8f7" strokeWidth="2" />
            </svg>
          </ZoomTrack>
        </StatusRight>
      </Status>

      <Flyout>
        <SliverRow>
          <Sep $x={200} /><Sep $x={204} /><Sep $x={422} /><Sep $x={425} />
          <HotBtn><BreaksIco s={1.5} />Разрывы<Caret /></HotBtn>
          <SliverIcons>
            <WaterIco /><PageColorIco /><BordersIco />
          </SliverIcons>
          <SliverHead>Отс</SliverHead>
        </SliverRow>
        <Menu>
          <MenuHead $h={24}>Разрывы страниц</MenuHead>
          <Item icon={<BreakPageThumb />} u="С" rest="траница" d1="Выбор точки, в которой заканчивается одна страница" d2="и начинается следующая страница." />
          <Item icon={<ColumnThumb />} u="С" rest="толбец" d1="Указывает, что текст, следующий за разрывом колонки," d2="будет перенесен в начало следующей колонки." />
          <Item icon={<WrapThumb />} u="О" rest="бтекание текстом" d1="Обтекание текста вокруг объектов на веб-страницах." />
          <MenuHead $h={21} $mt={2}>Разрывы разделов</MenuHead>
          <Item icon={<NextThumb />} u="С" rest="ледующая страница" d1="Вставка разрыва раздела и начало нового раздела со" d2="следующей страницы." />
          <Item icon={<CurrentThumb />} u="Т" rest="екущая страница" d1="Вставка разрыва раздела и начало нового раздела с" d2="той же страницы." />
          <Item icon={<NumThumb a="2" b="4" />} u="Ч" rest="етная страница" d1="Вставка разрыва раздела и начало нового раздела с" d2="четной страницы." />
          <Item icon={<NumThumb a="1" b="3" />} u="Н" rest="ечетная страница" d1="Вставка разрыва раздела и начало нового раздела с" d2="нечетной страницы." />
        </Menu>
      </Flyout>

      <RedBox $x={187} $y={30} $w={132} $h={24} />
      <RedBox $x={140} $y={53} $w={214} $h={92} />
      <RedBox $x={351} $y={52} $w={155} $h={35} />

      <ArrowLayer viewBox="0 0 2277 895">
        <g fill="none" stroke="#7b0a2a" strokeWidth="6" strokeLinecap="round" strokeLinejoin="round">
          <path d="M532 408L330 314M335 331L329 314L347 314" />
          <path d="M997 608L1145 282M1126 297L1145 282L1147 303" />
          <path d="M996 703L1384 457M1366 457L1384 457L1378 477" />
        </g>
      </ArrowLayer>
    </Win>
  );
}
